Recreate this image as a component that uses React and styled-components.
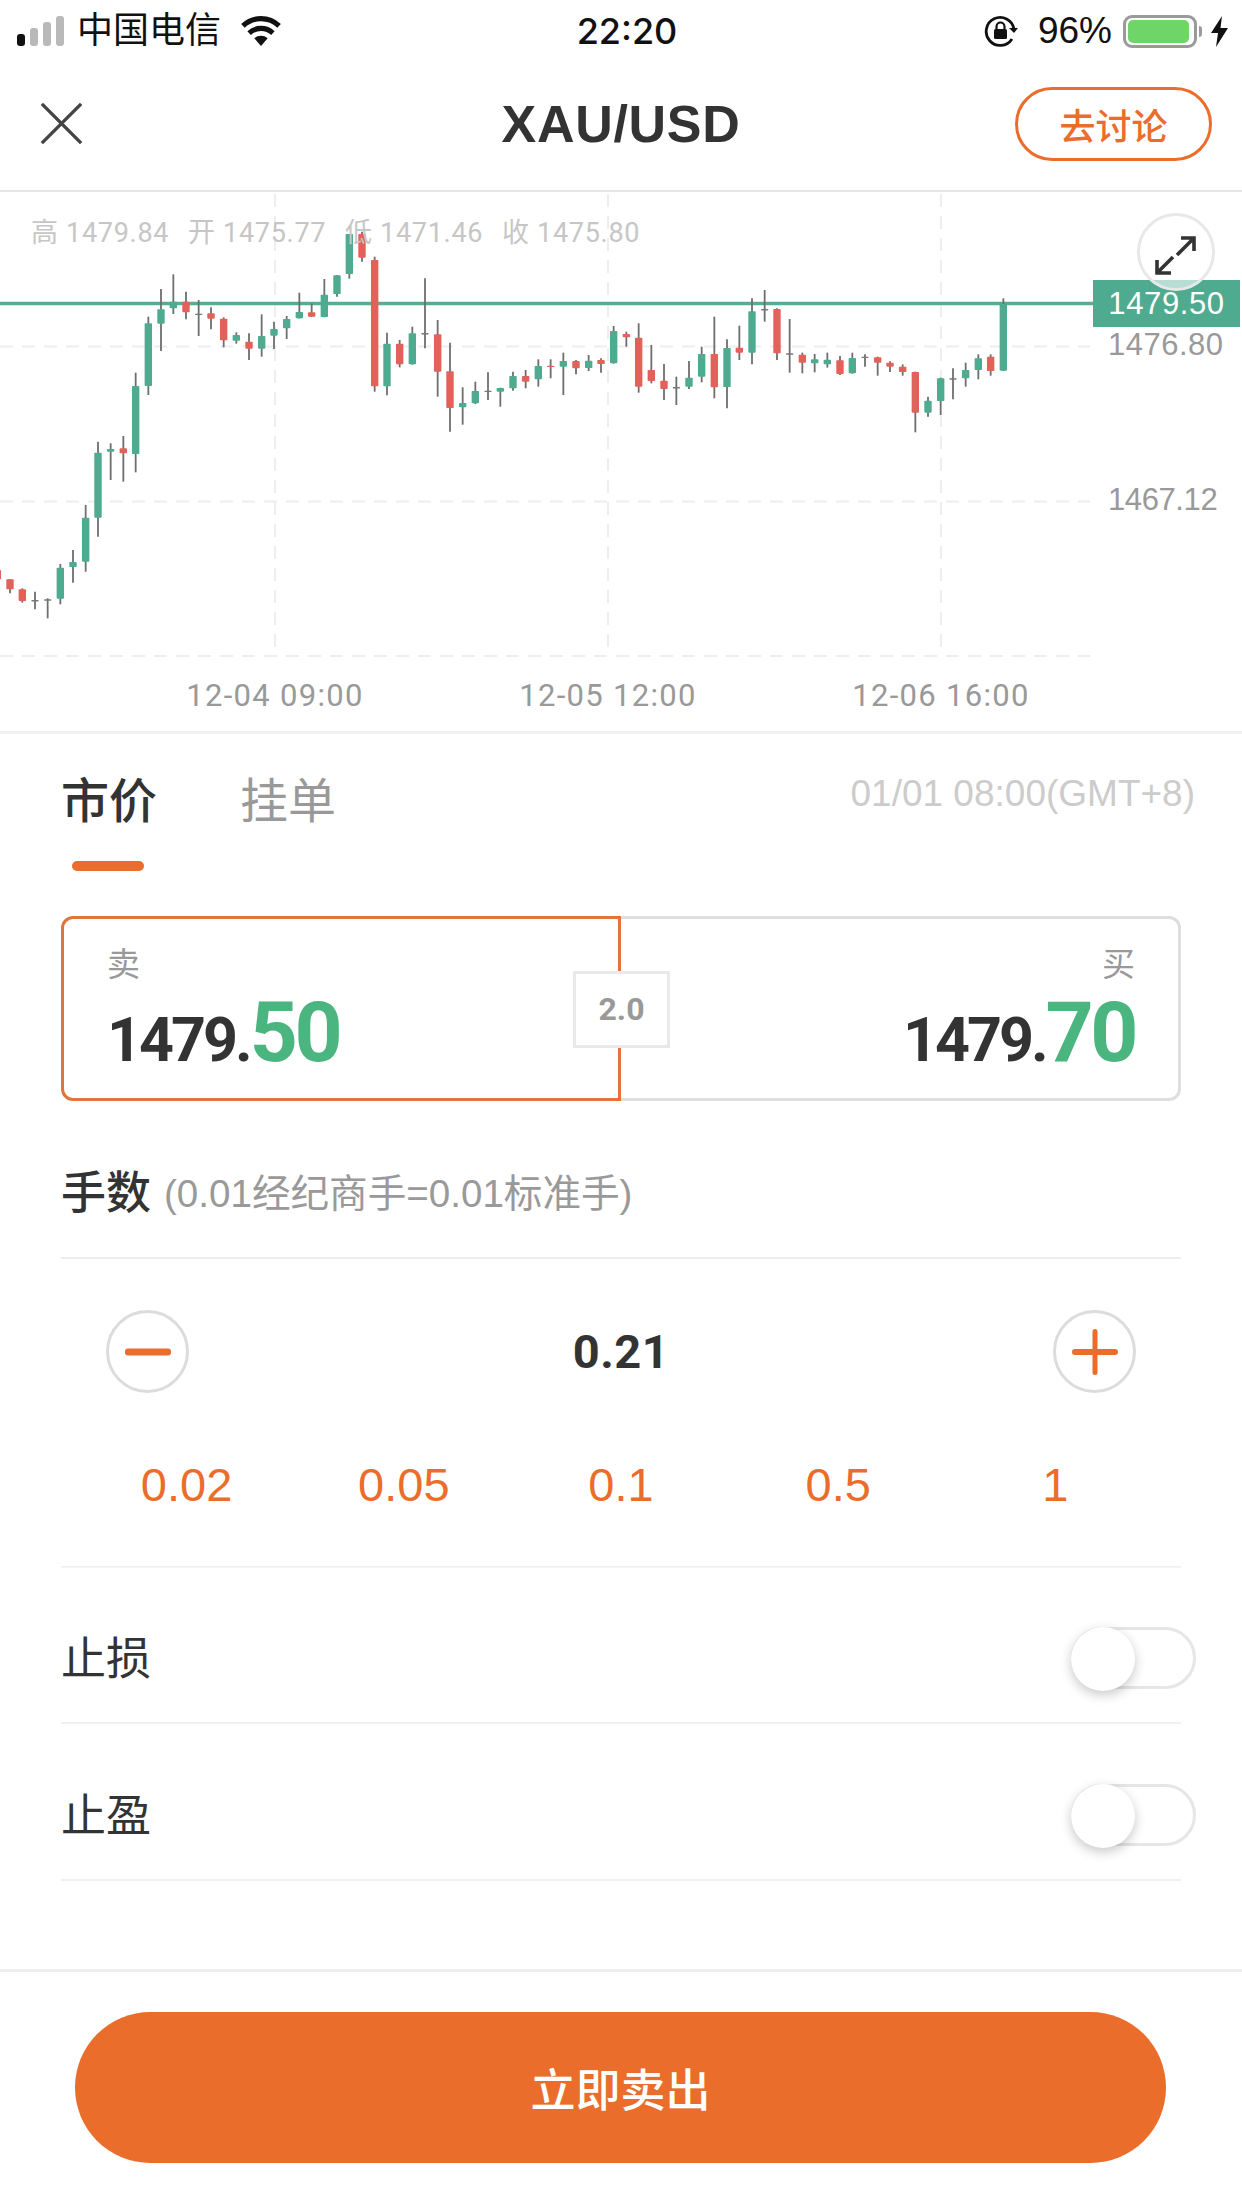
import React from 'react';
import styled, { createGlobalStyle } from 'styled-components';

const ORANGE = '#ea6d2c';
const SANS = `"Liberation Sans", "Noto Sans CJK SC", sans-serif`;
const DIN = `Roboto, "Noto Sans CJK SC", sans-serif`;

const GlobalStyle = createGlobalStyle`
  html, body {
    margin: 0;
    padding: 0;
    background: #fff;
  }
  * { box-sizing: border-box; }
`;

const Page = styled.div`
  width: 1242px;
  height: 2208px;
  overflow: hidden;
  background: #fff;
  font-family: ${SANS};
  color: #333;
`;

/* status bar */
const StatusBar = styled.div`
  height: 66px;
  position: relative;
  display: flex;
  align-items: center;
  justify-content: space-between;
  padding: 0 14px 4px 17px;
  color: #111;
`;

const StatusGroup = styled.div`
  display: flex;
  align-items: center;
`;

const Carrier = styled.span`
  font-size: 36px;
  margin: 0 18px 0 13px;
  line-height: 44px;
`;

const Clock = styled.span`
  position: absolute;
  left: 0;
  right: 0;
  top: 10px;
  text-align: center;
  font-size: 36px;
  line-height: 42px;
  font-weight: 500;
  font-family: Inter, ${SANS};
  padding-left: 12px;
`;

const Percent = styled.span`
  font-size: 37px;
  line-height: 44px;
  margin: 0 11px 0 20px;
`;

const Battery = styled.div`
  width: 74px;
  height: 33px;
  border: 3px solid #9a9a9a;
  border-radius: 9px;
  padding: 2px;
  position: relative;
  margin-right: 14px;

  &::after {
    content: '';
    position: absolute;
    right: -8px;
    top: 8px;
    width: 3px;
    height: 11px;
    border-radius: 0 3px 3px 0;
    background: #9a9a9a;
  }
`;

const BatteryFill = styled.div`
  height: 100%;
  width: 96%;
  background: #6fd568;
  border-radius: 5px;
`;

/* nav bar */
const NavBar = styled.div`
  height: 126px;
  border-bottom: 2px solid #e6e6e6;
  display: flex;
  align-items: center;
  justify-content: space-between;
  padding: 0 30px 9px 40px;
  position: relative;
`;

const Title = styled.h1`
  position: absolute;
  left: 0;
  right: 0;
  top: 28px;
  margin: 0;
  text-align: center;
  font-size: 52px;
  line-height: 60px;
  font-weight: 700;
  letter-spacing: 0.7px;
  color: #333;
`;

const DiscussButton = styled.button`
  width: 197px;
  height: 74px;
  border: 3px solid ${ORANGE};
  border-radius: 37px;
  background: #fff;
  color: ${ORANGE};
  font-family: ${SANS};
  font-size: 36px;
  font-weight: 500;
  padding: 0;
  position: relative;
`;

/* chart */
const Chart = styled.div`
  height: 542px;
  position: relative;
  border-bottom: 3px solid #f1f1f1;
  overflow: hidden;
`;

const ChartSvg = styled.svg`
  display: block;
`;

const Ohlc = styled.div`
  position: absolute;
  left: 31px;
  top: 23px;
  display: flex;
  gap: 20px;
  font-family: ${DIN};
  font-size: 27px;
  line-height: 36px;
  letter-spacing: 0.7px;
  color: #c6c6c6;
`;

const OhlcItem = styled.span`
  width: 137px;
  white-space: nowrap;
`;

const PriceTag = styled.div`
  position: absolute;
  left: 1093px;
  top: 88px;
  width: 147px;
  height: 47px;
  background: #4fab90;
  color: #fff;
  font-size: 31px;
  line-height: 47px;
  text-align: center;
  letter-spacing: 0.6px;
`;

const AxisPrice = styled.span`
  position: absolute;
  left: 1108px;
  top: ${p => p.$top}px;
  font-size: 31px;
  line-height: 36px;
  letter-spacing: ${p => p.$tight ? '-0.4px' : '0.5px'};
  color: #999;
`;

const DateLabel = styled.span`
  position: absolute;
  left: ${p => p.$center - 100}px;
  width: 200px;
  top: 486px;
  text-align: center;
  font-family: ${DIN};
  font-size: 31px;
  line-height: 36px;
  letter-spacing: 1.3px;
  color: #999;
`;

const ExpandButton = styled.div`
  position: absolute;
  left: 1137px;
  top: 21px;
  width: 78px;
  height: 78px;
  border-radius: 50%;
  border: 3px solid #e8e8e8;
  background: rgba(255, 255, 255, 0.6);
`;

/* order form */
const Form = styled.div`
  padding: 0 61px;
`;

const TabsRow = styled.div`
  display: flex;
  justify-content: space-between;
  align-items: flex-start;
  padding-top: 35px;
  margin-right: -14px;
`;

const Tabs = styled.div`
  display: flex;
  gap: 83px;
`;

const Tab = styled.div`
  font-size: 48px;
  line-height: 66px;
  font-weight: ${p => (p.$active ? 500 : 400)};
  color: ${p => (p.$active ? '#333' : '#999')};
  position: relative;
`;

const TabMark = styled.div`
  width: 72px;
  height: 10px;
  border-radius: 5px;
  margin: 26px 0 0 11px;
  background: ${ORANGE};
`;

const ServerTime = styled.span`
  font-size: 37px;
  line-height: 50px;
  color: #ccc;
  white-space: nowrap;
`;

const Quote = styled.div`
  margin-top: 45px;
  height: 185px;
  display: flex;
  position: relative;
`;

const QuoteSide = styled.div`
  flex: ${p => (p.$sell ? '0 0 560px' : '1')};
  border: 3px solid ${p => (p.$sell ? '#e0743a' : '#dedede')};
  border-left-width: ${p => (p.$sell ? 3 : 0)}px;
  border-radius: ${p => (p.$sell ? '12px 0 0 12px' : '0 12px 12px 0')};
  padding: ${p => (p.$sell ? '26px 0 0 43px' : '26px 43px 0 0')};
  text-align: ${p => (p.$sell ? 'left' : 'right')};
`;

const QuoteLabel = styled.div`
  font-size: 33px;
  line-height: 40px;
  color: #999;
`;

const QuotePrice = styled.div`
  font-family: ${DIN};
  font-weight: 700;
  font-size: 61px;
  line-height: 84px;
  letter-spacing: -3px;
  color: #333;
  margin-top: 6px;
  white-space: nowrap;
`;

const QuoteCents = styled.span`
  font-size: 84px;
  letter-spacing: -3.5px;
  color: #4ab57e;
`;

const Spread = styled.div`
  position: absolute;
  left: 512px;
  top: 55px;
  width: 97px;
  height: 77px;
  background: #fff;
  border: 3px solid #e9e9e9;
  font-family: ${DIN};
  font-weight: 700;
  font-size: 32px;
  line-height: 71px;
  text-align: center;
  color: #999;
`;

const LotsHeader = styled.div`
  height: 158px;
  padding-top: 66px;
  border-bottom: 2px solid #eee;
  display: flex;
  align-items: flex-start;
  gap: 13px;
`;

const FieldLabel = styled.span`
  font-size: 45px;
  line-height: 54px;
  font-weight: ${p => (p.$strong ? 500 : 400)};
  color: #333;
`;

const LotsHint = styled.span`
  font-size: 38.6px;
  line-height: 54px;
  color: #999;
`;

const Stepper = styled.div`
  padding: 51px 45px 0;
  display: flex;
  align-items: center;
  justify-content: space-between;
`;

const StepButton = styled.div`
  width: 83px;
  height: 83px;
  border-radius: 50%;
  border: 3px solid #dcdcdc;
  display: flex;
  align-items: center;
  justify-content: center;
`;

const LotsValue = styled.span`
  font-family: ${DIN};
  font-size: 47px;
  font-weight: 700;
  letter-spacing: 0.5px;
  color: #333;
`;

const Presets = styled.div`
  margin: 66px 17px 0;
  height: 52px;
  display: grid;
  grid-template-columns: repeat(5, 1fr);
`;

const Preset = styled.span`
  text-align: center;
  font-size: 47px;
  line-height: 52px;
  color: ${ORANGE};
`;

const PresetDivider = styled.div`
  height: 1px;
  margin-top: 55px;
  background: #eee;
  box-shadow: 0 1px 0 #f4f4f4;
`;

const ToggleRow = styled.div`
  height: 157px;
  padding-top: 60px;
  border-bottom: 2px solid #f0f0f0;
  display: flex;
  align-items: flex-start;
  justify-content: space-between;

  ${FieldLabel} {
    line-height: 66px;
  }
`;

const Track = styled.div`
  width: 125px;
  height: 62px;
  margin-right: -15px;
  border: 3px solid #e6e6e6;
  border-radius: 31px;
  position: relative;
`;

const Knob = styled.div`
  position: absolute;
  left: -3px;
  top: -3px;
  width: 64px;
  height: 64px;
  border-radius: 50%;
  background: #fff;
  box-shadow: 0 4px 12px rgba(0, 0, 0, 0.22);
`;

const Footer = styled.div`
  margin-top: 88px;
  border-top: 3px solid #eeeef2;
  padding: 40px 76px 0 75px;
`;

const SubmitButton = styled.button`
  width: 100%;
  height: 151px;
  border: none;
  border-radius: 76px;
  background: ${ORANGE};
  color: #fff;
  font-family: ${SANS};
  font-size: 45px;
  font-weight: 500;
  display: block;
`;

/* [x, wickTop, bodyTop, bodyBottom, wickBottom, colour] read off the picture */
const CANDLES_A = [
  [-8, 1045, 1050, 1078, 1080, 'r'], [30, 1078, 1078, 1108, 1120, 'r'], [67, 1105, 1108, 1143, 1148, 'r'],
  [105, 1115, 1140, 1141, 1168, 'd'], [143, 1135, 1138, 1140, 1195, 'd'], [181, 1032, 1043, 1136, 1153, 'g'],
  [219, 990, 1026, 1041, 1088, 'g'], [257, 855, 893, 1025, 1055, 'g'], [294, 665, 698, 893, 950, 'g'],
  [332, 670, 687, 695, 780, 'g'], [370, 648, 685, 700, 785, 'r'], [407, 458, 498, 702, 757, 'g'],
  [445, 290, 310, 498, 525, 'g'], [483, 207, 268, 311, 393, 'g'], [520, 163, 245, 265, 282, 'g'],
  [558, 215, 245, 277, 298, 'r'], [596, 240, 281, 282, 348, 'd'], [633, 262, 280, 296, 328, 'r'],
  [671, 292, 296, 361, 382, 'r'], [709, 337, 345, 362, 371, 'g'], [747, 340, 365, 386, 420, 'r'],
  [785, 283, 348, 386, 410, 'g'], [822, 305, 327, 347, 387, 'g'], [860, 288, 297, 325, 357, 'g'],
  [898, 218, 276, 295, 296, 'g'], [935, 250, 277, 290, 291, 'r'], [973, 177, 224, 291, 292, 'g'],
  [1011, 165, 166, 222, 230, 'g'], [1048, 42, 42, 162, 176, 'g'], [1086, 35, 42, 113, 125, 'r'],
  [1124, 110, 120, 499, 515, 'r'], [1161, 338, 371, 499, 526, 'g'], [1199, 360, 371, 433, 442, 'r'],
  [1237, 320, 340, 433, 434, 'g'],
];

const CANDLES_B = [
  [75, 175, 339, 340, 385, 'd'], [113, 300, 343, 455, 530, 'r'], [150, 368, 454, 564, 635, 'r'],
  [188, 502, 549, 562, 614, 'g'], [226, 485, 513, 550, 552, 'g'], [264, 457, 512, 514, 540, 'd'],
  [301, 503, 504, 515, 560, 'g'], [339, 455, 468, 505, 512, 'g'], [377, 450, 468, 485, 505, 'r'],
  [415, 418, 438, 478, 500, 'g'], [452, 418, 437, 439, 475, 'r'], [490, 398, 423, 440, 525, 'g'],
  [528, 420, 423, 445, 463, 'r'], [566, 405, 422, 444, 453, 'g'], [603, 415, 420, 432, 458, 'r'],
  [641, 318, 333, 430, 431, 'g'], [679, 335, 342, 352, 380, 'r'], [716, 310, 353, 500, 518, 'r'],
  [754, 375, 450, 483, 490, 'r'], [792, 432, 482, 507, 540, 'r'], [829, 470, 501, 503, 555, 'd'],
  [867, 423, 473, 500, 507, 'g'], [905, 380, 402, 470, 487, 'g'], [943, 290, 402, 502, 535, 'r'],
  [981, 358, 384, 501, 565, 'g'], [1018, 317, 383, 398, 420, 'r'], [1056, 235, 274, 398, 433, 'g'],
  [1094, 210, 267, 270, 305, 'd'], [1131, 265, 267, 400, 420, 'r'], [1169, 297, 400, 402, 458, 'd'],
  [1207, 398, 404, 428, 460, 'r'], [1244, 402, 418, 430, 457, 'g'],
];

const CANDLES_C = [
  [82, 458, 479, 493, 503, 'g'], [120, 468, 481, 522, 525, 'r'], [157, 458, 474, 520, 521, 'g'],
  [195, 463, 470, 472, 500, 'd'], [233, 470, 472, 488, 527, 'r'], [270, 484, 488, 500, 516, 'r'],
  [308, 493, 500, 516, 527, 'r'], [346, 515, 516, 638, 697, 'r'], [384, 590, 602, 638, 650, 'g'],
  [422, 533, 535, 603, 645, 'g'], [459, 505, 535, 536, 598, 'd'], [497, 488, 510, 535, 560, 'g'],
  [535, 463, 475, 510, 538, 'g'], [572, 463, 470, 513, 527, 'r'], [610, 295, 312, 512, 513, 'g'],
];

const CANDLE_FILL = { g: '#4fab90', r: '#e2625a', d: '#777' };

const toCandles = (rows, originX, originY) =>
  rows.map(([x, wt, bt, bb, wb, c]) => ({
    x: originX + x / 3,
    wickTop: originY + wt / 3,
    bodyTop: originY + bt / 3,
    bodyBottom: originY + bb / 3,
    wickBottom: originY + wb / 3,
    color: c,
  }));

const CANDLES = [
  ...toCandles(CANDLES_A, 0, 220),
  ...toCandles(CANDLES_B, 400, 220),
  ...toCandles(CANDLES_C, 800, 200),
];

function CandleChart() {
  return (
    <ChartSvg width="1242" height="539" viewBox="0 192 1242 539">
      <g stroke="#eeeeee" strokeWidth="2" strokeDasharray="13 9" fill="none">
        <path d="M0 346.5H1090" />
        <path d="M0 501.5H1090" />
        <path d="M0 656H1090" />
        <path d="M275 194V656" />
        <path d="M608 194V656" />
        <path d="M941 194V656" />
      </g>
      <path d="M0 303.5H1095" stroke="#55ae94" strokeWidth="3.4" />
      {CANDLES.map((c, i) => (
        <g key={i}>
          <line x1={c.x} x2={c.x} y1={c.wickTop} y2={c.wickBottom} stroke="#6e6e6e" strokeWidth="1.8" />
          <rect
            x={c.x - 3.7}
            y={c.bodyTop}
            width="7.4"
            height={Math.max(c.bodyBottom - c.bodyTop, 1.4)}
            rx="0.8"
            fill={CANDLE_FILL[c.color]}
          />
        </g>
      ))}
    </ChartSvg>
  );
}

const SignalIcon = () => (
  <svg width="47" height="30" viewBox="0 0 47 30">
    <rect x="0" y="18" width="8" height="12" rx="3" fill="#111" />
    <rect x="13" y="12" width="8" height="18" rx="3" fill="#b9b9b9" />
    <rect x="26" y="6" width="8" height="24" rx="3" fill="#b9b9b9" />
    <rect x="39" y="0" width="8" height="30" rx="3" fill="#b9b9b9" />
  </svg>
);

const WifiIcon = () => (
  <svg width="44" height="31" viewBox="0 0 42 30">
    <path d="M21 29 L14.5 21.5 A10 10 0 0 1 27.5 21.5 Z" fill="#111" />
    <path d="M9.5 16.5 A17 17 0 0 1 32.5 16.5" fill="none" stroke="#111" strokeWidth="5" />
    <path d="M3.5 9.5 A25.5 25.5 0 0 1 38.5 9.5" fill="none" stroke="#111" strokeWidth="5" />
  </svg>
);

const RotationLockIcon = () => (
  <svg width="34" height="32" viewBox="0 0 34 32">
    <path d="M28 24 A14 14 0 1 1 30 14" fill="none" stroke="#111" strokeWidth="2.8" />
    <path d="M25 13 H34 L30 18 Z" fill="#111" />
    <rect x="10" y="14" width="13" height="10" rx="1.5" fill="#111" />
    <path d="M12.5 14 V11.5 A4 4 0 0 1 20.5 11.5 V14" fill="none" stroke="#111" strokeWidth="2.2" />
  </svg>
);

const BoltIcon = () => (
  <svg width="17" height="31" viewBox="0 0 17 31">
    <path d="M11 0 L0 17 H7 L5 31 L17 12 H9.5 Z" fill="#111" />
  </svg>
);

const CloseIcon = () => (
  <svg width="43" height="43" viewBox="0 0 46 46">
    <path d="M2 2 L44 44 M44 2 L2 44" stroke="#444" strokeWidth="3.6" fill="none" />
  </svg>
);

const ExpandIcon = () => (
  <svg width="72" height="72" viewBox="3 3 72 72">
    <g fill="none" stroke="#333" strokeWidth="3.6">
      <path d="M20 60 L36 44 M20 47 V60 H34" />
      <path d="M57 25 L40 42 M44 25 H57 V38" />
    </g>
  </svg>
);

const MinusIcon = () => (
  <svg width="46" height="8" viewBox="0 0 46 8">
    <rect width="46" height="7" y="0.5" rx="3" fill={ORANGE} />
  </svg>
);

const PlusIcon = () => (
  <svg width="46" height="46" viewBox="0 0 46 46">
    <rect x="0" y="20" width="46" height="6" rx="3" fill={ORANGE} />
    <rect x="20.5" y="0" width="5" height="46" rx="2.5" fill={ORANGE} />
  </svg>
);

const OHLC = [['高', '1479.84'], ['开', '1475.77'], ['低', '1471.46'], ['收', '1475.80']];
const DATES = [['12-04 09:00', 275], ['12-05 12:00', 608], ['12-06 16:00', 941]];
const PRESETS = ['0.02', '0.05', '0.1', '0.5', '1'];

export default function App() {
  return (
    <Page>
      <GlobalStyle />
      <StatusBar>
        <StatusGroup>
          <SignalIcon />
          <Carrier>中国电信</Carrier>
          <WifiIcon />
        </StatusGroup>
        <Clock>22:20</Clock>
        <StatusGroup>
          <RotationLockIcon />
          <Percent>96%</Percent>
          <Battery><BatteryFill /></Battery>
          <BoltIcon />
        </StatusGroup>
      </StatusBar>

      <NavBar>
        <CloseIcon />
        <Title>XAU/USD</Title>
        <DiscussButton>去讨论</DiscussButton>
      </NavBar>

      <Chart>
        <CandleChart />
        <Ohlc>
          {OHLC.map(([label, value]) => (
            <OhlcItem key={label}>{label} {value}</OhlcItem>
          ))}
        </Ohlc>
        <PriceTag>1479.50</PriceTag>
        <AxisPrice $top={135}>1476.80</AxisPrice>
        <AxisPrice $top={290} $tight>1467.12</AxisPrice>
        {DATES.map(([text, center]) => (
          <DateLabel key={text} $center={center}>{text}</DateLabel>
        ))}
        <ExpandButton><ExpandIcon /></ExpandButton>
      </Chart>

      <Form>
        <TabsRow>
          <Tabs>
            <div>
              <Tab $active>市价</Tab>
              <TabMark />
            </div>
            <Tab>挂单</Tab>
          </Tabs>
          <ServerTime>01/01 08:00(GMT+8)</ServerTime>
        </TabsRow>

        <Quote>
          <QuoteSide $sell>
            <QuoteLabel>卖</QuoteLabel>
            <QuotePrice>1479.<QuoteCents>50</QuoteCents></QuotePrice>
          </QuoteSide>
          <QuoteSide>
            <QuoteLabel>买</QuoteLabel>
            <QuotePrice>1479.<QuoteCents>70</QuoteCents></QuotePrice>
          </QuoteSide>
          <Spread>2.0</Spread>
        </Quote>

        <LotsHeader>
          <FieldLabel $strong>手数</FieldLabel>
          <LotsHint>(0.01经纪商手=0.01标准手)</LotsHint>
        </LotsHeader>

        <Stepper>
          <StepButton><MinusIcon /></StepButton>
          <LotsValue>0.21</LotsValue>
          <StepButton><PlusIcon /></StepButton>
        </Stepper>

        <Presets>
          {PRESETS.map(value => <Preset key={value}>{value}</Preset>)}
        </Presets>
        <PresetDivider />

        <ToggleRow>
          <FieldLabel>止损</FieldLabel>
          <Track><Knob /></Track>
        </ToggleRow>
        <ToggleRow>
          <FieldLabel>止盈</FieldLabel>
          <Track><Knob /></Track>
        </ToggleRow>
      </Form>

      <Footer>
        <SubmitButton>立即卖出</SubmitButton>
      </Footer>
    </Page>
  );
}
